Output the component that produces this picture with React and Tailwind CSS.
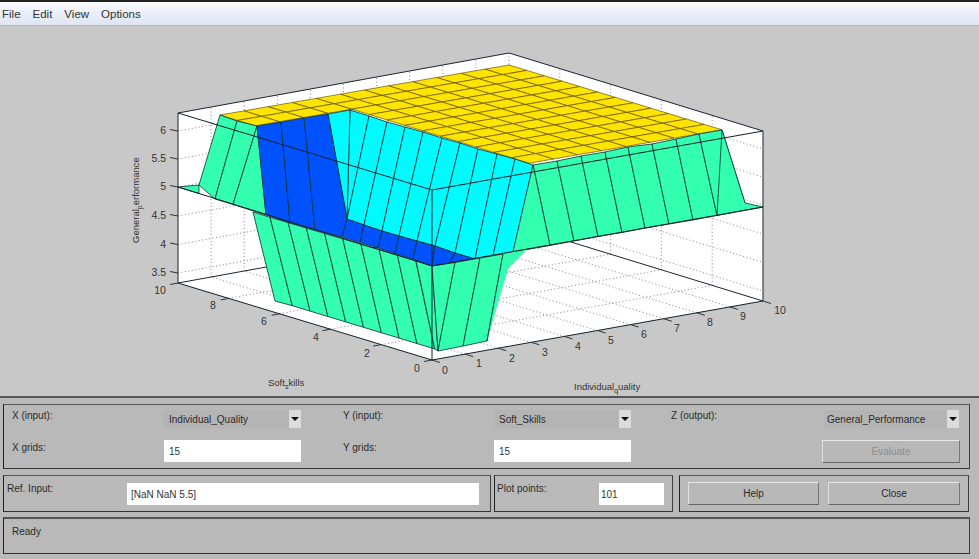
const GREEN = "#33FFB0";
const YELLOW = "#FFE400";
const CYAN = "#00FBFF";
const BLUE = "#0052FF";
const EDGE = "#0a3030";

const lerp = (a, b, t) => [a[0] + (b[0] - a[0]) * t, a[1] + (b[1] - a[1]) * t];
const pts = (arr) => arr.map((p) => p[0].toFixed(1) + "," + p[1].toFixed(1)).join(" ");

function Poly({ p, fill, stroke = EDGE, sw = 0.8 }) {
  return <polygon points={pts(p)} fill={fill} stroke={stroke} strokeWidth={sw} strokeLinejoin="round" />;
}

// yellow plateau cells
function yellowCells() {
  const back = [509, 66];
  const ua = [-24.1, 4.17];
  const ub = [17.75, 5.4];
  const P = (a, b) => [back[0] + ua[0] * a + ub[0] * b, back[1] + ua[1] * a + ub[1] * b];
  const out = [];
  for (let a = 0; a < 12; a++) {
    for (let b = 0; b < 12; b++) {
      if (a < 8 || b < 2) out.push([P(a, b), P(a + 1, b), P(a + 1, b + 1), P(a, b + 1)]);
    }
  }
  return out;
}

function panels(tops, bottoms) {
  const out = [];
  for (let i = 0; i < tops.length - 1; i++) out.push([tops[i], tops[i + 1], bottoms[i + 1], bottoms[i]]);
  return out;
}

const cyanTops = [[350, 111], [369, 117], [387, 123], [405, 128], [423, 133], [442, 139], [460, 144], [478, 150], [497, 155], [515, 160], [533, 166]];
const cyanBottoms = [[347, 220], [347, 220], [364, 226], [382, 232], [399, 237], [417, 242], [435, 247], [455, 254], [475, 260], [493, 256.5], [513, 253]];

const greenRTops = [[533, 166], [557, 162], [581, 157], [605, 153], [628, 148], [652, 145], [676, 140], [699, 135], [722, 131]];
const greenRBottoms = [[550, 246.5], [574, 242], [598, 237.5], [622, 233.5], [645, 229], [669, 225], [693, 221], [717, 216.5], [745, 204]];

const frontLeftTops = Array.from({ length: 10 }, (_, k) => k === 0 ? [253, 213] : [270 + 18.2 * (k - 1), 218.3 + 5.4 * (k - 1)]);
const frontLeftBottoms = Array.from({ length: 10 }, (_, k) => k === 0 ? [275, 302] : [292.3 + 17.8 * (k - 1), 306.7 + 5.4 * (k - 1)]);

const blueStripTop = [[347, 220], [364, 226], [382, 232], [399, 237], [417, 242], [435, 247]];
const blueStripBottom = [[342, 238], [360, 243.5], [378, 249], [395, 254.5], [413, 260], [432, 267]];

const zTicks = [["6", 132], ["5.5", 160], ["5", 188], ["4.5", 217], ["4", 245.5], ["3.5", 274]];
const yTicks = [[10, 160, 295], [8, 213, 310], [6, 264, 326], [4, 316, 342], [2, 367, 358], [0, 417, 373]];
const xLabels = [[0, 445, 375], [1, 479, 368], [2, 512, 363], [3, 545, 357], [4, 578, 351], [5, 611, 345], [6, 644, 339], [7, 677, 333], [8, 710, 327], [9, 743, 321], [10, 780, 315]];

const FF = "'Liberation Sans', Arial, sans-serif";

function Plot() {
  const A = [178, 284], B = [509, 224], C = [763, 302], D = [432, 361];
  const lift = 170;
  const up = (p, h = lift) => [p[0], p[1] - h];
  const dotted = [];
  const dot = (a, b, k) => dotted.push(<line key={k} x1={a[0]} y1={a[1]} x2={b[0]} y2={b[1]} />);
  // height lines on both back walls
  [274, 245.5, 217, 188, 160, 132].forEach((y, i) => {
    const h = 284 - y;
    dot(up(A, h), up(B, h), "l" + i);
    dot(up(B, h), up(C, h), "r" + i);
  });
  for (let k = 1; k < 10; k++) {
    const t = k / 10;
    const onBack = lerp(A, B, t);
    const onFront = lerp(D, C, t);
    dot(onFront, onBack, "fx" + k);
    dot(onBack, up(onBack), "vx" + k);
  }
  for (let k = 2; k < 10; k += 2) {
    const t = k / 10;
    const onLeft = lerp(D, A, t);
    const onRight = lerp(C, B, t);
    dot(onLeft, onRight, "fy" + k);
    dot(onRight, up(onRight), "vy" + k);
  }

  return (
    <svg viewBox="0 27 979 370" className="block w-full h-full" style={{ fontFamily: FF }}>
      <polygon points="178,114 509,54 763,132 763,302 432,361 178,284" fill="#ffffff" />
      <g stroke="#777" strokeWidth="0.9" strokeDasharray="1 2.5">{dotted}</g>
      <g stroke="#1c2430" strokeWidth="1" fill="none">
        <polyline points="178,284 178,114 509,54 763,132 763,302" />
        <line x1="509" y1="54" x2="509" y2="224" stroke="#777" strokeDasharray="1 2.5" />
        <polyline points="178,284 509,224 763,302" />
      </g>

      {/* surface, back to front */}
      {yellowCells().map((p, i) => <Poly key={"y" + i} p={p} fill={YELLOW} stroke="#5a4a00" sw={0.65} />)}
      {panels(cyanTops, cyanBottoms).map((p, i) => <Poly key={"c" + i} p={p} fill={CYAN} />)}
      <Poly p={[[328, 115], [350, 111], [347, 220]]} fill={CYAN} />
      {panels(greenRTops, greenRBottoms).map((p, i) => <Poly key={"gr" + i} p={p} fill={GREEN} />)}
      <Poly p={[[533, 166], [550, 246.5], [513, 253]]} fill={GREEN} />
      <Poly p={[[722, 131], [745, 204], [763, 208], [717, 216.5]]} fill={GREEN} />

      <Poly p={[[178, 188], [199, 186], [199, 194.5]]} fill={GREEN} />
      <Poly p={[[199, 186], [220, 116], [237, 122], [215, 200]]} fill={GREEN} />
      <Poly p={[[215, 200], [237, 122], [257, 127], [233, 205.5]]} fill={GREEN} />
      <Poly p={[[233, 205.5], [257, 127], [266, 216]]} fill={GREEN} />

      <Poly p={[[257, 127], [281, 123], [290, 224], [266, 216]]} fill={BLUE} />
      <Poly p={[[281, 123], [304, 119], [315, 231], [290, 224]]} fill={BLUE} />
      <Poly p={[[304, 119], [328, 115], [347, 220], [342, 238], [315, 231]]} fill={BLUE} />
      {panels(blueStripTop, blueStripBottom).map((p, i) => <Poly key={"b" + i} p={p} fill={BLUE} />)}
      <Poly p={[[435, 247], [455, 254], [450, 264], [432, 267]]} fill={BLUE} />
      <Poly p={[[455, 254], [475, 260], [450, 264]]} fill={BLUE} />

      {panels(frontLeftTops, frontLeftBottoms).map((p, i) => <Poly key={"gl" + i} p={p} fill={GREEN} />)}
      <Poly p={[[416, 261.5], [432, 267], [438, 352], [434.7, 350]]} fill={GREEN} />
      <Poly p={[[432, 267], [455, 263.5], [438, 352]]} fill={GREEN} />
      <Poly p={[[455, 263.5], [480, 259], [463, 347], [438, 352]]} fill={GREEN} />
      <Poly p={[[480, 259], [503, 255], [487, 342], [463, 347]]} fill={GREEN} />
      <polygon points="503,255 527,250.5 508,270 487,342" fill={GREEN} />
      <line x1="503" y1="255" x2="487" y2="342" stroke={EDGE} strokeWidth="0.8" />

      {/* box edges drawn over the surface */}
      <g stroke="#10202c" strokeWidth="1" fill="none">
        <polyline points="178,114 432,191 763,132" />
        <polyline points="178,188 432,267 763,208" />
        <line x1="432" y1="191" x2="432" y2="361" />
        <polyline points="178,284 432,361 763,302" />
      </g>

      {/* ticks */}
      <g stroke="#333" strokeWidth="1">
        {zTicks.map(([t, y]) => <line key={t} x1="170" y1={y - 1.5} x2="178" y2={y} />)}
        {[2, 4, 6, 8].map((k) => {
          const p = lerp(D, A, k / 10);
          return <line key={k} x1={p[0]} y1={p[1]} x2={p[0] - 8} y2={p[1] + 1.5} />;
        })}
        <line x1="178" y1="284" x2="170" y2="285.5" />
        <line x1="432" y1="361" x2="424" y2="362.5" />
        {[0, 1, 2, 3, 4, 5, 6, 7, 8, 9, 10].map((k) => {
          const p = lerp(D, C, k / 10);
          return <line key={k} x1={p[0]} y1={p[1]} x2={p[0] + 8} y2={p[1] + 2.5} />;
        })}
      </g>

      <g fontSize="10.5" fill="#333" >
        {zTicks.map(([t, y]) => <text key={t} x="166" y={y + 3} textAnchor="end">{t}</text>)}
        {yTicks.map(([t, x, y]) => <text key={t} x={x} y={y} textAnchor="middle">{t}</text>)}
        {xLabels.map(([t, x, y]) => <text key={t} x={x} y={y} textAnchor="middle">{t}</text>)}
      </g>
      <g fontSize="9.5" fill="#333">
        <text x="268" y="387">Soft<tspan fontSize="7" dy="3">s</tspan><tspan dy="-3">kills</tspan></text>
        <text x="574" y="391">Individual<tspan fontSize="7" dy="3">q</tspan><tspan dy="-3">uality</tspan></text>
        <text transform="translate(139 244) rotate(-90)">General<tspan fontSize="7" dy="3">p</tspan><tspan dy="-3">erformance</tspan></text>
      </g>
    </svg>
  );
}

function Frame({ className = "", children }) {
  return (
    <div className={"border border-[#3f3f3f] border-t-[#555] border-l-[#222] border-b-[#333] " + className}>
      {children}
    </div>
  );
}

function Select({ value, w }) {
  return (
    <div className={"flex h-[18px] items-stretch bg-[#b4b4b4] " + w}>
      <span className="flex-1 text-[10px] leading-[19px] text-[#2b2b2b]">{value}</span>
      <span className="flex w-[12px] items-center justify-center bg-[#dcdcdc]">
        <span className="block h-0 w-0 border-x-[4px] border-t-[4px] border-x-transparent border-t-[#111]" />
      </span>
    </div>
  );
}

function Field({ value, w }) {
  return (
    <div className={"h-[22px] bg-white text-[10px] leading-[24px] text-[#333] " + w}>{value}</div>
  );
}

function Btn({ label, w, disabled }) {
  return (
    <div
      className={
        "flex h-[23px] items-center justify-center border border-t-[#e8e8e8] border-l-[#e0e0e0] border-r-[#777] border-b-[#666] bg-[#b8b8b8] text-[10px] " +
        w +
        (disabled ? " text-[#8c8c8c]" : " text-[#2b2b2b]")
      }
    >
      {label}
    </div>
  );
}

function Label({ children, w }) {
  return <div className={"text-[10px] leading-[12px] text-[#2b2b2b] " + w}>{children}</div>;
}

export default function App() {
  return (
    <div
      className="flex h-[559px] w-[979px] flex-col overflow-hidden bg-[#c8c8c8]"
      style={{ fontFamily: FF }}
    >
      <div className="h-[2px] bg-[#222]" />
      <div className="flex h-[24px] items-center gap-[12px] border-b border-[#b9b9b9] bg-gradient-to-b from-[#fbfcfe] via-[#e9eef8] to-[#dfe5f2] pl-[2px] pt-[2px] text-[11.5px] text-[#333]">
        <span>File</span>
        <span>Edit</span>
        <span>View</span>
        <span>Options</span>
      </div>
      <div className="h-[370px] shrink-0">
        <Plot />
      </div>
      <div className="flex-1 border-t-2 border-[#555] bg-[#b9b9b9] pl-[3px] pr-[9px] pt-[6px]">
        <Frame className="h-[65px] pl-[8px] pt-[5px]">
          <div className="flex">
            <Label w="w-[151px]">X (input):</Label>
            <Select value="Individual_Quality" w="w-[138px] pl-[6px]" />
            <Label w="ml-[42px] w-[151px]">Y (input):</Label>
            <Select value="Soft_Skills" w="w-[137px] pl-[5px]" />
            <Label w="ml-[40px] w-[153px]">Z (output):</Label>
            <Select value="General_Performance" w="w-[135px] pl-[3px]" />
          </div>
          <div className="mt-[12px] flex">
            <Label w="w-[152px] pt-[2px]">X grids:</Label>
            <Field value="15" w="w-[137px] pl-[5px]" />
            <Label w="ml-[42px] w-[151px] pt-[2px]">Y grids:</Label>
            <Field value="15" w="w-[137px] pl-[5px]" />
            <div className="w-[191px]" />
            <Btn label="Evaluate" w="w-[138px]" disabled />
          </div>
        </Frame>
        <div className="mt-[6px] flex h-[37px] gap-[3px]">
          <Frame className="flex w-[488px] pl-[3px] pt-[7px]">
            <Label w="w-[120px]">Ref. Input:</Label>
            <Field value="[NaN NaN 5.5]" w="w-[352px] pl-[4px]" />
          </Frame>
          <Frame className="flex w-[179px] pl-[2px] pt-[7px]">
            <Label w="w-[102px]">Plot points:</Label>
            <Field value="101" w="w-[65px] pl-[2px]" />
          </Frame>
          <Frame className="ml-[3px] flex w-[290px] gap-[9px] pl-[8px] pt-[6px]">
            <Btn label="Help" w="w-[131px]" />
            <Btn label="Close" w="w-[132px]" />
          </Frame>
        </div>
        <Frame className="mt-[5px] h-[37px] border-t-2 pl-[8px] pt-[7px]">
          <Label>Ready</Label>
        </Frame>
      </div>
    </div>
  );
}
